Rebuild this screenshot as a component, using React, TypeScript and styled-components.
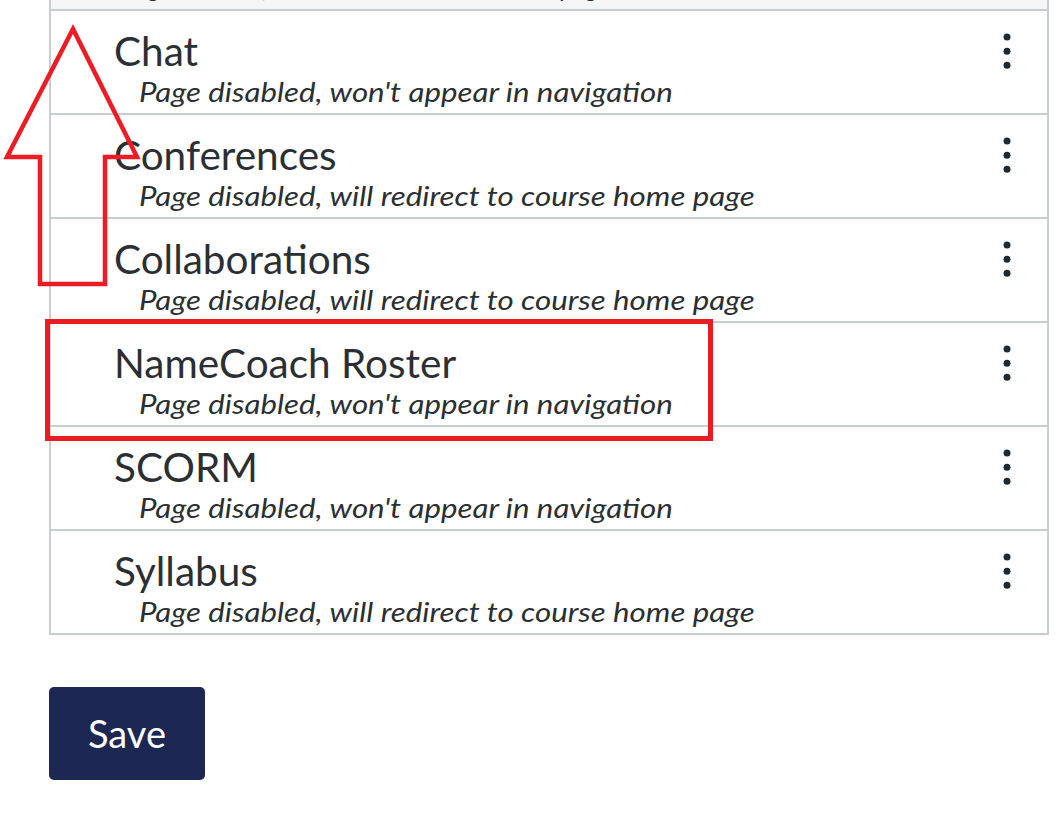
import React from "react";
import styled, { createGlobalStyle } from "styled-components";

const GlobalStyle = createGlobalStyle`
  html, body {
    margin: 0;
    padding: 0;
    background: #ffffff;
    overflow: hidden;
  }
  body {
    font-family: Lato, "Open Sans", "Liberation Sans", sans-serif;
    color: #2b2f33;
  }
`;

const Page = styled.div`
  position: relative;
  width: 1063px;
  height: 830px;
  padding: 0 14px 0 49px;
  box-sizing: border-box;
  overflow: hidden;
`;

const List = styled.ul`
  list-style: none;
  margin: -93px 0 0 0;
  padding: 0;
  border-left: 2px solid #c7cdd1;
  border-right: 2px solid #c7cdd1;
`;

const Row = styled.li<{ $muted?: boolean }>`
  display: grid;
  grid-template-columns: 1fr auto;
  height: 102px;
  border-bottom: 2px solid #c7cdd1;
  background: ${(p) => (p.$muted ? "#f5f5f5" : "#ffffff")};
`;

const TextBlock = styled.div`
  padding: 16px 0 0 63px;
  display: flex;
  flex-direction: column;
  align-items: flex-start;
`;

const Title = styled.div`
  font-size: 40.5px;
  line-height: 47px;
  font-weight: 400;
  color: #2b2f33;
  white-space: nowrap;
`;

const Subtitle = styled.div<{ $compact?: boolean }>`
  font-size: ${(p) => (p.$compact ? "24.7px" : "27.5px")};
  line-height: 32px;
  font-style: italic;
  transform: ${(p) => (p.$compact ? "none" : "scaleX(1.136)")};
  transform-origin: 0 50%;
  margin: 1.5px 0 0 ${(p) => (p.$compact ? "9px" : "25px")};
  color: #2b2f33;
  white-space: nowrap;
`;

const Kebab = styled.button`
  align-self: start;
  margin: 22px 36px 0 0;
  padding: 0;
  border: 0;
  background: transparent;
  width: 8px;
  height: 36px;
  display: flex;
`;

const SaveButton = styled.button`
  margin-top: 52px;
  width: 156px;
  height: 93px;
  border: 0;
  border-radius: 5px;
  background: #1d2754;
  color: #ffffff;
  font-family: Lato, "Open Sans", "Liberation Sans", sans-serif;
  font-size: 38px;
  line-height: 1;
  padding: 0 0 2px 0;
  display: flex;
  align-items: center;
  justify-content: center;
`;

const Arrow = styled.svg`
  position: absolute;
  left: 0;
  top: 0;
  overflow: visible;
  pointer-events: none;
`;

const HighlightBox = styled.div`
  position: absolute;
  left: 45px;
  top: 319px;
  width: 668px;
  height: 122px;
  box-sizing: border-box;
  border: 5px solid #ec1c24;
  pointer-events: none;
`;

const DotsIcon = () => (
  <svg width="8" height="36" viewBox="0 0 8 36">
    <circle cx="4" cy="4" r="3.5" fill="#1f2933" />
    <circle cx="4" cy="18.3" r="3.5" fill="#1f2933" />
    <circle cx="4" cy="32.3" r="3.5" fill="#1f2933" />
  </svg>
);

type Item = { title: string; note: string; muted?: boolean };

const items: Item[] = [
  { title: "Pages", note: "Page disabled, will redirect to course home page", muted: true },
  { title: "Chat", note: "Page disabled, won't appear in navigation" },
  { title: "Conferences", note: "Page disabled, will redirect to course home page" },
  { title: "Collaborations", note: "Page disabled, will redirect to course home page" },
  { title: "NameCoach Roster", note: "Page disabled, won't appear in navigation" },
  { title: "SCORM", note: "Page disabled, won't appear in navigation" },
  { title: "Syllabus", note: "Page disabled, will redirect to course home page" },
];

export default function App() {
  return (
    <>
      <GlobalStyle />
      <Page>
        <List>
          {items.map((it) => (
            <Row key={it.title} $muted={it.muted}>
              <TextBlock>
                <Title>{it.title}</Title>
                <Subtitle $compact={it.muted}>{it.note}</Subtitle>
              </TextBlock>
              <Kebab aria-label={`Settings for ${it.title}`}>
                <DotsIcon />
              </Kebab>
            </Row>
          ))}
        </List>
        <SaveButton>Save</SaveButton>
        <Arrow width="150" height="300" viewBox="0 0 150 300">
          <polygon
            points="73,29 137,157 105,157 105,284 40,284 40,157 7,157"
            fill="none"
            stroke="#ec1c24"
            strokeWidth="4.5"
            strokeLinejoin="miter"
          />
        </Arrow>
        <HighlightBox />
      </Page>
    </>
  );
}
